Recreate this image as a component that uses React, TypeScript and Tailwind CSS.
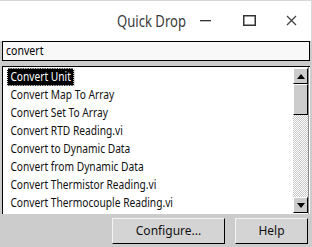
import React from "react";

const items = [
  "Convert Unit",
  "Convert Map To Array",
  "Convert Set To Array",
  "Convert RTD Reading.vi",
  "Convert to Dynamic Data",
  "Convert from Dynamic Data",
  "Convert Thermistor Reading.vi",
  "Convert Thermocouple Reading.vi",
];

// raised 3D bevel used by buttons and scrollbar parts
const bevel =
  "bg-[#cccccc] border-t border-l border-white border-r border-b border-r-black border-b-black";

export default function App() {
  return (
    <div
      className="w-[312px] h-[247px] flex flex-col bg-[#cccccc] overflow-hidden"
      style={{ fontFamily: '"Noto Sans", sans-serif' }}
    >
      {/* Title bar */}
      <div className="h-[41px] bg-white border-t border-r border-[#d8d8d8] flex items-center relative">
        <div className="absolute left-[117px] top-[7px] text-[17px] text-[#3a3a3a] scale-x-[0.77] origin-left whitespace-nowrap">
          Quick Drop
        </div>
        <svg className="absolute left-[200px] top-[19px]" width="11" height="2" viewBox="0 0 11 2">
          <rect x="0" y="0" width="11" height="1.3" fill="#333" />
        </svg>
        <svg className="absolute left-[243px] top-[14px]" width="13" height="11" viewBox="0 0 13 11">
          <rect x="0.75" y="0.75" width="11.5" height="9.5" fill="none" stroke="#333" strokeWidth="1.5" />
        </svg>
        <svg className="absolute left-[286px] top-[14px]" width="11" height="11" viewBox="0 0 11 11">
          <path d="M1 1 L10 10 M10 1 L1 10" stroke="#444" strokeWidth="1.3" />
        </svg>
      </div>

      {/* Search */}
      <div className="mx-[2px] h-[20px] border border-black bg-[#f8f8f8] flex items-center pl-[3px] text-[12px] text-black">
        <span className="scale-x-[0.88] origin-left">convert</span>
      </div>

      {/* List */}
      <div className="mx-[2px] mt-[5px] h-[148px] flex border-t border-l border-black bg-white">
        <div className="flex-1 pt-[1px] pl-[4px]">
          {items.map((t, i) => (
            <div key={t} className="h-[18px] flex items-center text-[12px]">
              <span
                className={
                  i === 0
                    ? "bg-black text-white px-[4px] h-[18px] flex items-center outline outline-1 outline-dotted outline-white -outline-offset-1 scale-x-[0.85] origin-left whitespace-nowrap"
                    : "px-[4px] text-[#111] scale-x-[0.85] origin-left whitespace-nowrap"
                }
              >
                {t}
              </span>
            </div>
          ))}
        </div>
        <div className="w-[16px] flex flex-col border-r border-[#888] mr-[1px]">
          <div className={`h-[16px] ${bevel} flex items-center justify-center mt-[1px]`}>
            <svg width="8" height="5" viewBox="0 0 8 5">
              <path d="M0 5 L4 0 L8 5 Z" fill="#000" />
            </svg>
          </div>
          <div className={`h-[31px] ${bevel}`} />
          <div className="flex-1 bg-[repeating-conic-gradient(#c8c8c8_0_25%,#ffffff_0_50%)] bg-[length:2px_2px]" />
          <div className={`h-[16px] ${bevel} flex items-center justify-center mb-[1px]`}>
            <svg width="8" height="5" viewBox="0 0 8 5">
              <path d="M0 0 L4 5 L8 0 Z" fill="#000" />
            </svg>
          </div>
        </div>
      </div>

      {/* Footer */}
      <div className="flex-1 flex items-center justify-end gap-[10px] pr-[4px]">
        <button
          type="button"
          className="w-[113px] h-[26px] bg-[#d4d4d4] border-t border-l border-[#f4f4f4] border-r border-b border-r-black border-b-black text-[12px] text-[#111]"
        >
          Configure...
        </button>
        <button
          type="button"
          className="w-[73px] h-[26px] bg-[#d4d4d4] border-t border-l border-[#f4f4f4] border-r border-b border-r-black border-b-black text-[12px] text-[#111]"
        >
          Help
        </button>
      </div>
    </div>
  );
}
